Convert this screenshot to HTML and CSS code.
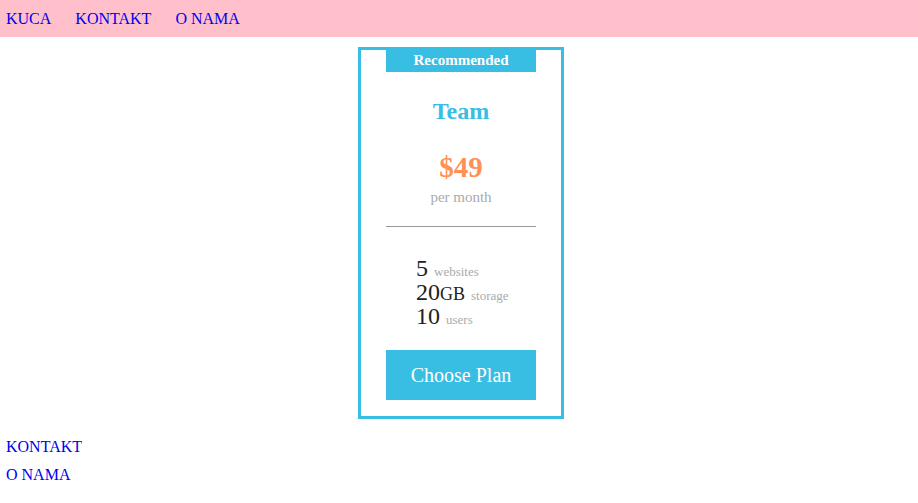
FILE: index.html
```html
<!DOCTYPE html>
<html>
<head>
<meta charset="utf-8">
<link rel="stylesheet" href="styles.css">
</head>
<body>
<nav class="nav">
  <a href="#">KUCA</a>
  <a href="#">KONTAKT</a>
  <a href="#">O NAMA</a>
</nav>
<div class="card">
  <div class="badge">Recommended</div>
  <h2 class="title">Team</h2>
  <div class="price">$49</div>
  <div class="period">per month</div>
  <hr class="rule">
  <ul class="features">
    <li>5 <span class="label">websites</span></li>
    <li>20<span class="unit">GB</span> <span class="label">storage</span></li>
    <li>10 <span class="label">users</span></li>
  </ul>
  <a class="btn" href="#">Choose Plan</a>
</div>
<div class="footer-links">
  <a href="#">KONTAKT</a>
  <a href="#">O NAMA</a>
</div>
</body>
</html>
```
FILE: styles.css
```css
html, body {
  margin: 0;
  padding: 0;
  font-family: "Liberation Serif", "Times New Roman", serif;
  font-size: 16px;
  background: #fff;
}
a { color: #0000ee; text-decoration: none; }
.nav {
  background: #ffc0cb;
  height: 37px;
  display: flex;
  align-items: center;
  gap: 24px;
  padding: 0 6px;
}
.card {
  width: 150px;
  margin: 10px 0 0 calc(50% - 101px);
  border: 3px solid #38bde3;
  padding: 0 25px 16px;
  display: flex;
  flex-direction: column;
  align-items: stretch;
  text-align: center;
}
.badge {
  background: #38bde3;
  color: #fff;
  font-weight: bold;
  font-size: 15px;
  height: 22px;
  line-height: 21px;
}
.title {
  margin: 25px 0 0;
  color: #38bde3;
  font-size: 24px;
  font-weight: bold;
  line-height: 28px;
}
.price {
  margin-top: 26px;
  color: #ff9157;
  font-size: 29px;
  font-weight: bold;
  line-height: 33px;
}
.period {
  margin-top: 3px;
  color: #aaa;
  font-size: 15px;
  line-height: 20px;
}
.rule {
  margin: 19px 0 0;
  border: 0;
  border-top: 1px solid #999;
  height: 0;
}
.features {
  list-style: none;
  margin: 29px 0 0;
  padding: 0 0 0 30px;
  text-align: left;
}
.features li {
  font-size: 24px;
  color: #222;
  line-height: 24px;
  height: 24px;
}
.unit { font-size: 18px; }
.label {
  font-size: 13px;
  color: #aaa;
}
.btn {
  margin-top: 22px;
  background: #38bde3;
  color: #fff;
  font-size: 20px;
  height: 50px;
  line-height: 50px;
}
.footer-links {
  padding: 19px 6px 0;
  display: flex;
  flex-direction: column;
  gap: 10px;
}
.footer-links a { line-height: 18px; }
```
